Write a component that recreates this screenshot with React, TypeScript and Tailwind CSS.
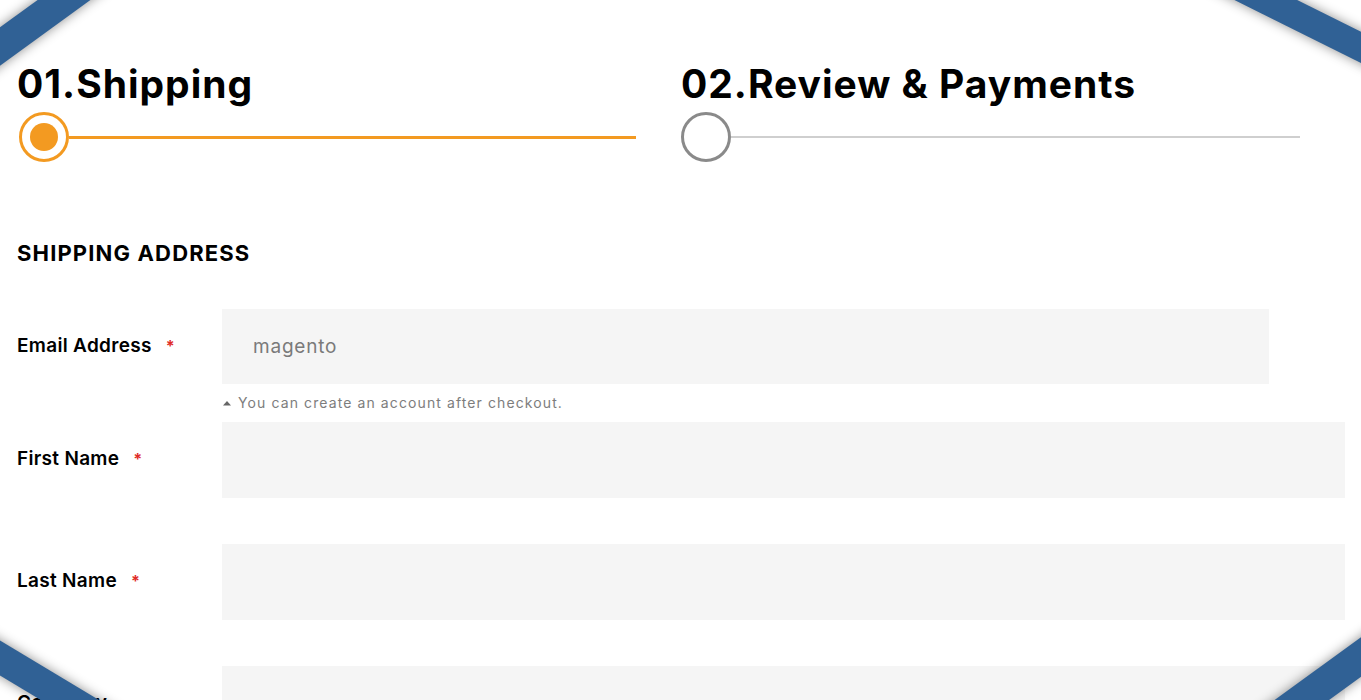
import React from "react";

function Step({ title, active }: { title: string; active?: boolean }) {
  return (
    <div className="flex-1 pr-[45px]">
      <h3 className="text-[39px] font-bold leading-[48px] tracking-[1px] text-black whitespace-nowrap">
        {title}
      </h3>
      <div className="mt-[4px] flex items-center">
        {active ? (
          <div className="ml-[2px] flex h-[50px] w-[50px] shrink-0 items-center justify-center rounded-full border-[3px] border-[#f39a21] bg-white">
            <div className="h-[28px] w-[28px] rounded-full bg-[#f39a21]" />
          </div>
        ) : (
          <div className="h-[50px] w-[50px] shrink-0 rounded-full border-[3px] border-[#8a8a8a] bg-white" />
        )}
        {active ? (
          <div className="h-[3px] flex-1 bg-[#f39a21]" />
        ) : (
          <div className="h-[2px] flex-1 bg-[#cfcfcf]" />
        )}
      </div>
    </div>
  );
}

function Label({ text, required = true }: { text: string; required?: boolean }) {
  return (
    <div className="w-[205px] shrink-0 pt-[25px]">
      <span className="text-[19px] font-semibold leading-[24px] tracking-[0.3px] text-black">
        {text}
      </span>
      {required && (
        <span className="ml-[14px] text-[16px] font-bold leading-[24px] text-[#e02b27]">*</span>
      )}
    </div>
  );
}

export default function App() {
  return (
    <div
      className="relative h-[700px] w-full overflow-hidden bg-white"
      style={{ fontFamily: "Inter, 'Noto Sans', sans-serif" }}
    >
      <div className="pl-[17px] pr-[16px] pt-[60px]">
        <div className="flex">
          <Step title="01.Shipping" active />
          <Step title="02.Review & Payments" />
        </div>

        <h2 className="mt-[77px] text-[22px] font-bold leading-[28px] tracking-[1.15px] text-black">
          SHIPPING ADDRESS
        </h2>

        <div className="mt-[42px] flex flex-col">
          <div className="flex">
            <Label text="Email Address" />
            <div className="flex-1">
              <div className="mr-[76px] flex h-[75px] items-center bg-[#f5f5f5] pl-[31px]">
                <span className="text-[19px] leading-[24px] tracking-[0.8px] text-[#7a7a7a]">magento</span>
              </div>
              <div className="mt-[9px] flex h-[20px] items-center">
                <svg width="10" height="8" viewBox="0 0 10 8" className="mr-[6px]">
                  <path d="M1 6.5 L5 2 L9 6.5 Z" fill="#666" />
                </svg>
                <span className="text-[14px] leading-[20px] tracking-[1.1px] text-[#7d7d7d]">
                  You can create an account after checkout.
                </span>
              </div>
            </div>
          </div>

          <div className="mt-[9px] flex">
            <Label text="First Name" />
            <div className="h-[76px] flex-1 bg-[#f5f5f5]" />
          </div>

          <div className="mt-[46px] flex">
            <Label text="Last Name" />
            <div className="h-[76px] flex-1 bg-[#f5f5f5]" />
          </div>

          <div className="mt-[46px] flex">
            <Label text="Company" required={false} />
            <div className="h-[76px] flex-1 bg-[#f5f5f5]" />
          </div>
        </div>
      </div>

      {/* corner ribbons */}
      <div className="pointer-events-none absolute left-[-128px] top-[15px] h-[31px] w-[300px] rotate-[-36deg] bg-[#306195] shadow-[0_0_12px_rgba(0,0,0,0.45)]" />
      <div className="pointer-events-none absolute right-[-129px] top-[23px] h-[28px] w-[300px] rotate-[26.5deg] bg-[#306195] shadow-[0_0_12px_rgba(0,0,0,0.45)]" />
      <div className="pointer-events-none absolute bottom-[27px] left-[-150px] h-[30px] w-[300px] rotate-[31deg] bg-[#306195] shadow-[0_0_12px_rgba(0,0,0,0.45)]" />
      <div className="pointer-events-none absolute bottom-[27px] right-[-150px] h-[32px] w-[300px] rotate-[-36deg] bg-[#306195] shadow-[0_0_12px_rgba(0,0,0,0.45)]" />
    </div>
  );
}
